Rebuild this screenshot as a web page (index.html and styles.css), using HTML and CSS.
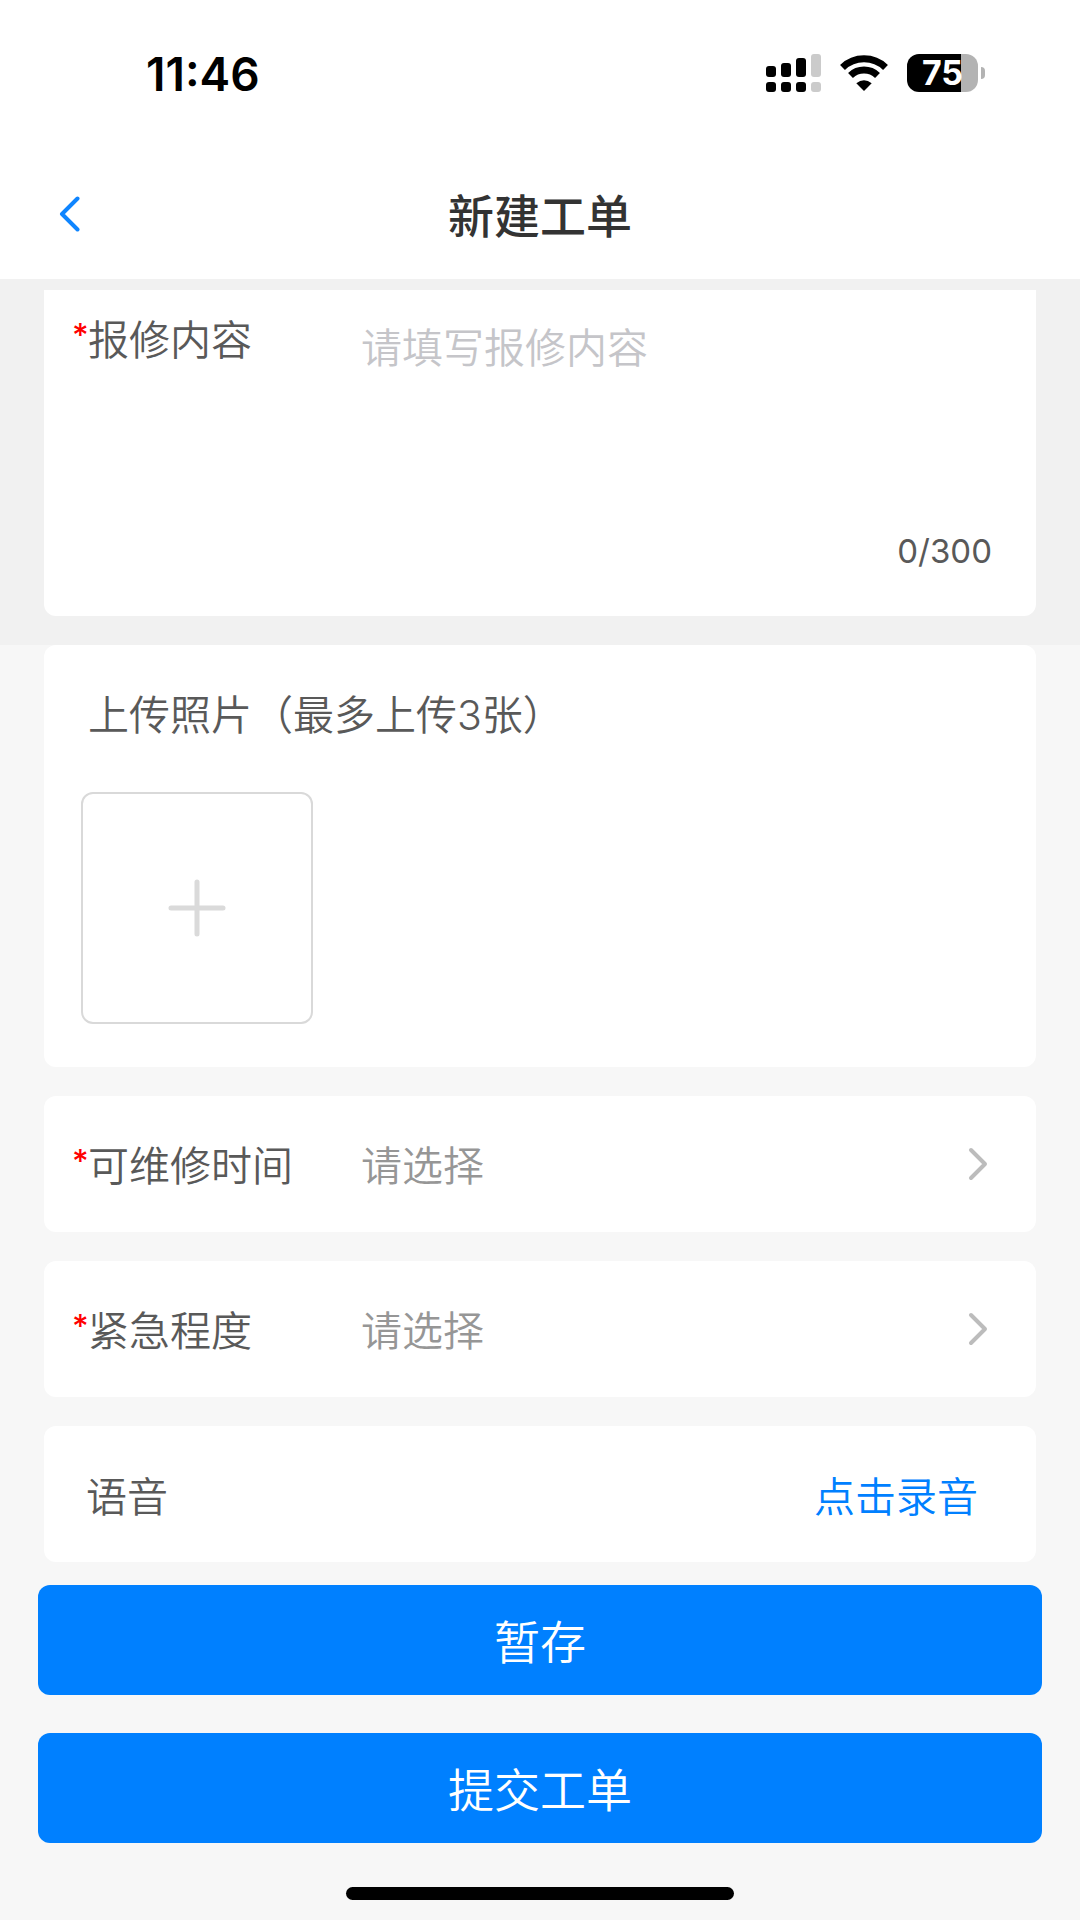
FILE: index.html
```html
<!DOCTYPE html>
<html lang="zh-CN">
<head>
<meta charset="utf-8">
<meta name="viewport" content="width=device-width, initial-scale=1">
<title>新建工单</title>
<link rel="stylesheet" href="styles.css">
</head>
<body>
<header class="header">
  <div class="status">
    <span class="status-time">11:46</span>
    <div class="status-icons">
      <svg class="signal" width="56" height="40" viewBox="0 0 56 40" aria-hidden="true">
        <rect x="0" y="13" width="10" height="11" rx="3"/>
        <rect x="15" y="10" width="10" height="14" rx="3"/>
        <rect x="30" y="5" width="10" height="19" rx="3"/>
        <rect class="signal-off" x="45" y="1" width="10" height="23" rx="3"/>
        <rect x="0" y="29" width="10" height="10" rx="3"/>
        <rect x="15" y="29" width="10" height="10" rx="3"/>
        <rect x="30" y="29" width="10" height="10" rx="3"/>
        <rect class="signal-off" x="45" y="29" width="10" height="10" rx="3"/>
      </svg>
      <svg class="wifi" width="48" height="40" viewBox="0 0 48 40" aria-hidden="true">
        <path class="wifi-arc" d="M2.5 14.5A31 31 0 0 1 45.500 14.500"/>
        <path class="wifi-arc" d="M10.500 22.500A19.500 19.500 0 0 1 37.500 22.500"/>
        <path d="M24 38L16.300 30.300Q24 24 31.700 30.300Z"/>
      </svg>
      <div class="battery">
        <span class="battery-body">75</span>
        <span class="battery-tip"></span>
      </div>
    </div>
  </div>
  <nav class="nav">
    <button class="back" type="button" aria-label="返回">
      <svg width="22" height="36" viewBox="0 0 22 36" aria-hidden="true"><path d="M18.500 2.500L3 18L18.500 33.500"/></svg>
    </button>
    <h1 class="title">新建工单</h1>
  </nav>
</header>

<form class="form">
  <section class="detail">
    <div class="card card-detail">
      <label class="label" for="content"><span class="star">*</span>报修内容</label>
      <div class="detail-field">
        <textarea class="textarea" id="content" maxlength="300" placeholder="请填写报修内容"></textarea>
        <span class="counter">0/300</span>
      </div>
    </div>
  </section>

  <div class="cards">
    <section class="card card-upload">
      <h2 class="upload-title">上传照片（最多上传3张）</h2>
      <button class="upload" type="button" aria-label="添加照片">
        <svg width="58" height="58" viewBox="0 0 58 58" aria-hidden="true"><path d="M29 3V55M3 29H55"/></svg>
      </button>
    </section>

    <div class="card row">
      <label class="label" for="time"><span class="star">*</span>可维修时间</label>
      <select class="select" id="time"><option>请选择</option></select>
      <svg class="chevron" width="20" height="34" viewBox="0 0 20 34" aria-hidden="true"><path d="M3 3L17 17L3 31"/></svg>
    </div>

    <div class="card row">
      <label class="label" for="level"><span class="star">*</span>紧急程度</label>
      <select class="select" id="level"><option>请选择</option></select>
      <svg class="chevron" width="20" height="34" viewBox="0 0 20 34" aria-hidden="true"><path d="M3 3L17 17L3 31"/></svg>
    </div>

    <div class="card row row-voice">
      <span>语音</span>
      <button class="record" type="button">点击录音</button>
    </div>
  </div>

  <div class="actions">
    <button class="action" type="button">暂存</button>
    <button class="action" type="submit">提交工单</button>
  </div>
</form>
<div class="home-indicator"></div>
</body>
</html>
```
FILE: styles.css
```css
* {
  box-sizing: border-box;
}

body {
  margin: 0;
  min-height: 100vh;
  background: #f7f7f7;
  color: #595959;
  font-family: "Inter", "Noto Sans CJK SC DemiLight", "Noto Sans CJK SC", sans-serif;
  font-size: 41px;
  font-weight: 350;
  line-height: 48px;
}

button,
select,
textarea {
  margin: 0;
  padding: 0;
  border: 0;
  background: none;
  color: inherit;
  font: inherit;
}

svg {
  display: block;
  flex: none;
}

/* Header */
.header {
  background: #fff;
}

.status {
  display: flex;
  align-items: center;
  justify-content: space-between;
  height: 145px;
  padding: 0 95px 0 146px;
  color: #000;
}

.status-time {
  padding-top: 2px;
  font-size: 46px;
  font-weight: 600;
}

.status-icons {
  display: flex;
  align-items: center;
}

.signal {
  margin-right: 18px;
}

.signal-off {
  fill: #cbcbcb;
}

.wifi {
  margin-right: 19px;
}

.wifi-arc {
  fill: none;
  stroke: #000;
  stroke-width: 7;
}

.battery {
  display: flex;
  align-items: center;
  gap: 3px;
}

.battery-body {
  width: 71px;
  height: 38px;
  border-radius: 12px;
  background: linear-gradient(90deg, #000 54px, #b3b3b3 54px);
  color: #fff;
  font-size: 34px;
  font-weight: 700;
  line-height: 38px;
  text-align: center;
}

.battery-tip {
  width: 4px;
  height: 12px;
  border-radius: 0 6px 6px 0;
  background: #b3b3b3;
}

.nav {
  display: grid;
  grid-template-columns: 1fr auto 1fr;
  align-items: center;
  height: 134px;
  padding: 4px 59px 0;
}

.back {
  justify-self: start;
}

.back path {
  fill: none;
  stroke: #0f85ff;
  stroke-width: 4;
  stroke-linecap: round;
  stroke-linejoin: round;
}

.title {
  margin: 0;
  padding-bottom: 2px;
  color: #333;
  font-family: "Noto Sans CJK SC", sans-serif;
  font-size: 46px;
  font-weight: 500;
}

/* Cards */
.card {
  border-radius: 12px;
  background: #fff;
}

.detail {
  padding: 11px 44px 29px;
  background: #f1f1f1;
}

.card-detail {
  display: flex;
  padding: 22px 44px 36px 28px;
  border-radius: 0 0 12px 12px;
}

.label {
  display: flex;
  flex: none;
  width: 289px;
  padding-top: 4px;
}

.star {
  width: 16px;
  color: #f00;
  font-size: 32px;
  font-weight: 500;
  line-height: 40px;
}

.detail-field {
  display: flex;
  flex: 1;
  flex-direction: column;
}

.textarea {
  height: 210px;
  padding-top: 12px;
  outline: 0;
  resize: none;
}

.textarea::placeholder {
  color: #c5c5c9;
  opacity: 1;
}

.counter {
  align-self: flex-end;
  font-size: 33px;
  font-weight: 400;
  line-height: 58px;
}

.cards {
  display: flex;
  flex-direction: column;
  gap: 29px;
  padding: 0 44px;
}

.card-upload {
  padding: 46px 37px 43px;
}

.upload-title {
  margin: 0 0 53px;
  padding-left: 7px;
  font-size: 41px;
  font-weight: 350;
}

.upload {
  display: flex;
  align-items: center;
  justify-content: center;
  width: 232px;
  height: 232px;
  border: 2px solid #d9d9d9;
  border-radius: 12px;
}

.upload path {
  fill: none;
  stroke: #dadada;
  stroke-width: 5;
  stroke-linecap: round;
}

.row {
  display: flex;
  align-items: center;
  height: 136px;
  padding: 0 48px 0 28px;
}

.select {
  flex: 1;
  padding-top: 4px;
  appearance: none;
  outline: 0;
  color: #969696;
}

.chevron path {
  fill: none;
  stroke: #bcbcbc;
  stroke-width: 4;
  stroke-linecap: round;
  stroke-linejoin: round;
}

.row-voice {
  justify-content: space-between;
  padding: 6px 58px 0 42px;
}

.record {
  color: #0080ff;
}

/* Bottom actions */
.actions {
  display: flex;
  flex-direction: column;
  gap: 38px;
  padding: 23px 38px 44px;
}

.action {
  height: 110px;
  padding-top: 4px;
  border-radius: 12px;
  background: #0080ff;
  color: #fff;
  font-size: 46px;
}

.home-indicator {
  width: 36%;
  height: 13px;
  margin: 0 auto 20px;
  border-radius: 7px;
  background: #000;
}
```
